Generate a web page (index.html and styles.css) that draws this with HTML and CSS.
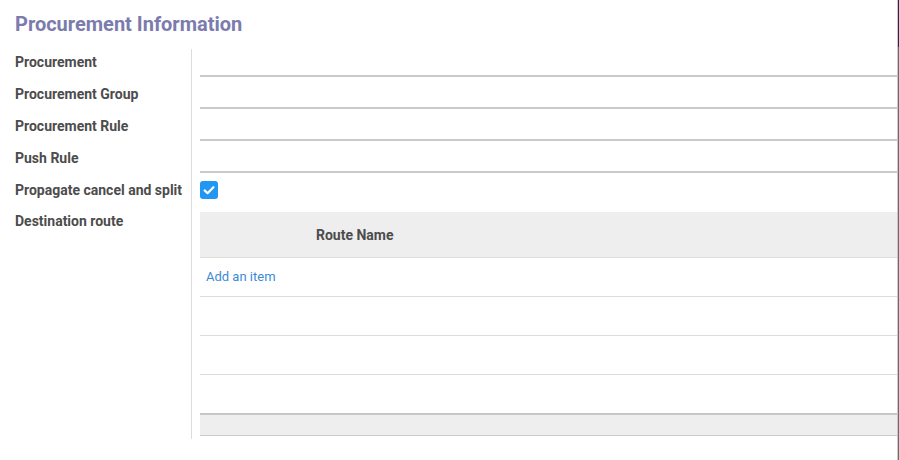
FILE: index.html
```html
<!DOCTYPE html>
<html>
<head>
<meta charset="utf-8">
<link rel="stylesheet" href="styles.css">
</head>
<body>
<div class="window">
  <div class="page">
    <h2 class="title">Procurement Information</h2>
    <div class="group">
      <div class="labels">
        <div class="label">Procurement</div>
        <div class="label">Procurement Group</div>
        <div class="label">Procurement Rule</div>
        <div class="label">Push Rule</div>
        <div class="label">Propagate cancel and split</div>
        <div class="label label-last">Destination route</div>
      </div>
      <div class="fields">
        <div class="field"></div>
        <div class="field"></div>
        <div class="field"></div>
        <div class="field"></div>
        <div class="check-row">
          <span class="checkbox">
            <svg width="18" height="18" viewBox="0 0 18 18"><path d="M4.6 9.4 L7.6 12.2 L13.4 6.2" fill="none" stroke="#fff" stroke-width="2.2" stroke-linecap="round" stroke-linejoin="round"/></svg>
          </span>
        </div>
        <div class="table">
          <div class="thead"><span class="th">Route Name</span></div>
          <div class="row add"><a class="add-link">Add an item</a></div>
          <div class="row"></div>
          <div class="row"></div>
          <div class="row last"></div>
          <div class="tfoot"></div>
        </div>
      </div>
    </div>
  </div>
  <div class="edge"></div>
</div>
</body>
</html>
```

FILE: styles.css
```css
* { box-sizing: border-box; }
html, body { margin: 0; padding: 0; background: #fff; }
body { font-family: Roboto, "Noto Sans", sans-serif; color: #4c4c4c; }
.window { display: flex; width: 899px; height: 460px; }
.page { flex: 1; padding: 12px 0 0 15px; }
.edge { width: 2px; border-left: 1px solid #c9c9c9; background: linear-gradient(#2e2156 0, #2e2156 47px, #6a6a6a 47px); }
.title { margin: 0; font-size: 20px; line-height: 24px; font-weight: 700; color: #7c7bad; }
.group { display: flex; margin-top: 11px; }
.labels { width: 176px; flex: none; }
.label { height: 32px; line-height: 30px; font-size: 14px; font-weight: 700; color: #4c4c4c; white-space: nowrap; }
.label-last { line-height: 28px; }
.fields { flex: 1; margin-top: 2px; border-left: 1px solid #dcdcdc; padding: 0 0 3px 8px; }
.field { height: 28px; border-bottom: 2px solid #cacaca; margin-bottom: 4px; }
.check-row { padding-top: 4px; height: 22px; }
.checkbox { display: block; width: 18px; height: 18px; border-radius: 3px; background: #2196f3; }
.checkbox svg { display: block; }
.table { margin-top: 13px; }
.thead { height: 46px; background: #eeeeee; border-bottom: 1px solid #dcdcdc; padding-left: 116px; display: flex; align-items: center; }
.th { font-size: 14px; font-weight: 700; color: #4c4c4c; }
.row { height: 39px; border-bottom: 1px solid #dcdcdc; }
.row.last { height: 38px; border-bottom: none; }
.row.add { display: flex; align-items: center; padding: 0 0 1px 6px; }
.add-link { font-size: 13px; color: #3b8ad6; }
.tfoot { height: 23px; background: #eeeeee; border-top: 2px solid #c6c6c6; border-bottom: 1px solid #cbcbcb; }
```
